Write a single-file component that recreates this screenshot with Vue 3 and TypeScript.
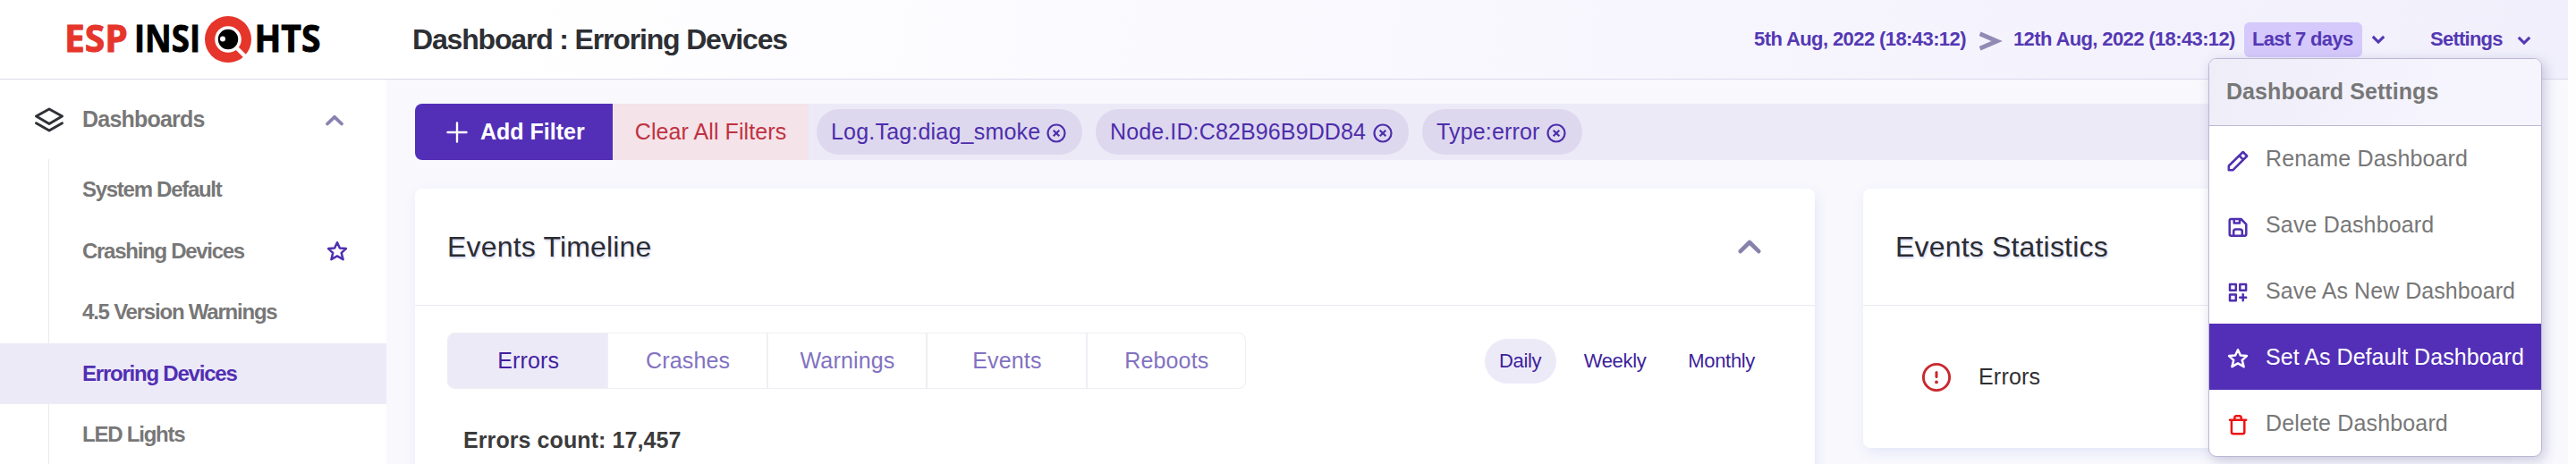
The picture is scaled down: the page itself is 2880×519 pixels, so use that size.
<script setup lang="ts">
import { ref } from 'vue'

interface NavItem { label: string; starred?: boolean; tight: string }
interface MenuItem { label: string; icon: string; tone: string }

const navItems: NavItem[] = [
  { label: 'System Default', tight: 'a' },
  { label: 'Crashing Devices', starred: true, tight: 'a' },
  { label: '4.5 Version Warnings', tight: 'b' },
  { label: 'Erroring Devices', tight: 'b' },
  { label: 'LED Lights', tight: 'b' },
]
const activeNav = ref('Erroring Devices')

const filters = [
  { label: 'Log.Tag:diag_smoke', size: 'chip-log' },
  { label: 'Node.ID:C82B96B9DD84', size: 'chip-node' },
  { label: 'Type:error', size: 'chip-type' },
]

const tabs = ['Errors', 'Crashes', 'Warnings', 'Events', 'Reboots']
const activeTab = ref('Errors')

const periods = ['Daily', 'Weekly', 'Monthly']
const activePeriod = ref('Daily')

const menuItems: MenuItem[] = [
  { label: 'Rename Dashboard', icon: 'pencil', tone: 'loose' },
  { label: 'Save Dashboard', icon: 'save', tone: 'loose' },
  { label: 'Save As New Dashboard', icon: 'grid', tone: '' },
  { label: 'Set As Default Dashboard', icon: 'star', tone: 'selected' },
  { label: 'Delete Dashboard', icon: 'trash', tone: 'loose danger' },
]
</script>

<template>
  <div class="page">
    <header class="topbar">
      <div class="brand">
        <svg class="logo" width="300" height="60" viewBox="66 14 300 60">
          <g font-family="'Open Sans', sans-serif" font-weight="700" font-size="41.5" stroke-width="0.9">
            <text x="72" y="58" fill="#e6352b" stroke="#e6352b" textLength="71" lengthAdjust="spacingAndGlyphs">ESP</text>
            <text x="150" y="58" fill="#000" stroke="#000" textLength="74" lengthAdjust="spacingAndGlyphs">INSI</text>
            <text x="284.500" y="58" fill="#000" stroke="#000" textLength="74" lengthAdjust="spacingAndGlyphs">HTS</text>
          </g>
          <circle cx="255" cy="44" r="26" fill="#e6352b" />
          <circle cx="255" cy="44" r="14.800" fill="#fff" />
          <path d="M264 53 L275 64" stroke="#fff" stroke-width="4.500" />
          <circle cx="255" cy="44" r="11.200" fill="#000" />
          <circle cx="249" cy="43.400" r="3" fill="#fff" />
        </svg>
      </div>
      <h1 class="page-title">Dashboard : Erroring Devices</h1>
      <div class="controls">
        <span class="date date-from">5th Aug, 2022 (18:43:12)</span>
        <svg class="arrow" width="38" height="24" viewBox="0 0 38 24">
          <path d="M0.500 3.800 L19.500 12 L0.500 20.200" fill="none" stroke="#918bb4" stroke-width="5" />
        </svg>
        <span class="date date-to">12th Aug, 2022 (18:43:12)</span>
        <span class="range">Last 7 days</span>
        <svg class="caret" width="16" height="10" viewBox="0 0 16 10">
          <path d="M1.800 1.800 L8 8 L14.200 1.800" />
        </svg>
        <span class="settings">Settings</span>
        <svg class="caret caret-settings" width="16" height="10" viewBox="0 0 16 10">
          <path d="M1.800 1.800 L8 8 L14.200 1.800" />
        </svg>
      </div>
    </header>

    <div class="body">
      <aside class="sidebar">
        <div class="nav-head">
          <svg width="34" height="30" viewBox="0 0 34 30" class="layers">
            <path d="M17 3 L31.500 11 L17 19.500 L2.500 11 Z M2.500 18.800 L17 27 L31.500 18.800" />
          </svg>
          <span class="nav-head-label">Dashboards</span>
          <svg width="22" height="14" viewBox="0 0 22 14" class="fold">
            <path d="M3 10.500 L11 2.800 L19 10.500" />
          </svg>
        </div>
        <nav class="nav-list">
          <a
            v-for="item in navItems"
            :key="item.label"
            class="nav-item"
            :class="[`fit-${item.tight}`, { active: item.label === activeNav }]"
            @click="activeNav = item.label"
          >
            <span>{{ item.label }}</span>
            <svg v-if="item.starred" width="24" height="24" viewBox="0 0 24 24" class="icon">
              <path d="M12 2.200 L14.900 8.500 L21.900 9.100 L16.700 13.900 L18.600 21.200 L12 17.400 L5.400 21.200 L7.200 13.900 L2.100 9.100 L9.100 8.500 Z" />
            </svg>
          </a>
        </nav>
      </aside>

      <main class="content">
        <div class="filterbar">
          <button class="add">
            <svg width="24" height="24" viewBox="0 0 24 24">
              <path d="M12 1.500 V22.500 M1.500 12 H22.500" stroke="#fff" stroke-width="2.400" stroke-linecap="round" />
            </svg>
            <span>Add Filter</span>
          </button>
          <button class="clear">Clear All Filters</button>
          <div v-for="f in filters" :key="f.label" class="chip" :class="f.size">
            <span>{{ f.label }}</span>
            <svg width="22" height="22" viewBox="0 0 22 22">
              <circle cx="11" cy="11" r="9.500" />
              <path d="M7.700 7.700 L14.300 14.300 M14.300 7.700 L7.700 14.300" />
            </svg>
          </div>
        </div>

        <div class="cards">
          <section class="card timeline">
            <div class="card-head">
              <h2>Events Timeline</h2>
              <svg width="28" height="18" viewBox="0 0 28 18" class="fold-lg">
                <path d="M3.700 14.200 L14 4 L24.300 14.200" />
              </svg>
            </div>
            <div class="toolbar">
              <div class="tabs">
                <button
                  v-for="t in tabs"
                  :key="t"
                  class="tab"
                  :class="{ active: t === activeTab }"
                  @click="activeTab = t"
                >{{ t }}</button>
              </div>
              <div class="periods">
                <button
                  v-for="p in periods"
                  :key="p"
                  class="period"
                  :class="{ active: p === activePeriod }"
                  @click="activePeriod = p"
                >{{ p }}</button>
              </div>
            </div>
            <div class="count">Errors count: 17,457</div>
          </section>

          <section class="card stats">
            <div class="card-head">
              <h2>Events Statistics</h2>
            </div>
            <div class="stat">
              <svg width="34" height="34" viewBox="0 0 34 34">
                <circle cx="17" cy="17" r="14.600" fill="none" stroke="#c9282d" stroke-width="2.900" />
                <path d="M17 11.500 V16.500" stroke="#c9282d" stroke-width="3" stroke-linecap="round" />
                <circle cx="17" cy="22.400" r="1.900" fill="#c9282d" />
              </svg>
              <span>Errors</span>
            </div>
          </section>
        </div>
      </main>
    </div>

    <div class="menu">
      <div class="menu-head">Dashboard Settings</div>
      <div v-for="m in menuItems" :key="m.label" class="menu-item" :class="m.tone">
        <svg width="24" height="24" viewBox="0 0 24 24" class="icon">
          <template v-if="m.icon === 'pencil'">
            <path d="M17.700 2 L22.200 6.500 L6.600 22.200 H1.800 V17.500 Z M13.500 6.200 L18 10.700" />
          </template>
          <template v-else-if="m.icon === 'save'">
            <path d="M4.500 3 H15.500 L21.300 8.800 V19.700 Q21.300 21.700 19.300 21.700 H4.700 Q2.700 21.700 2.700 19.700 V5 Q2.700 3 4.500 3 Z M7.700 3 V7.600 H14 V3 M7.200 21.500 V17 Q7.200 14.500 9.700 14.500 H14.300 Q16.800 14.500 16.800 17 V21.500" />
          </template>
          <template v-else-if="m.icon === 'grid'">
            <path d="M3 3 H9.800 V9.800 H3 Z M14.300 3 H21.100 V9.800 H14.300 Z M3 14.400 H9.800 V21.200 H3 Z M17.700 14.300 V21.300 M14.200 17.800 H21.200" />
          </template>
          <template v-else-if="m.icon === 'star'">
            <path d="M12 2.200 L14.900 8.500 L21.900 9.100 L16.700 13.900 L18.600 21.200 L12 17.400 L5.400 21.200 L7.200 13.900 L2.100 9.100 L9.100 8.500 Z" />
          </template>
          <template v-else>
            <path d="M3 6.700 H21.200 M4.900 6.700 V20.300 Q4.900 22.300 6.900 22.300 H17.300 Q19.300 22.300 19.300 20.300 V6.700 M8.300 6.500 V4.500 Q8.300 2.200 10.300 2.200 H13.700 Q15.700 2.200 15.700 4.500 V6.500" />
          </template>
        </svg>
        <span>{{ m.label }}</span>
      </div>
    </div>
  </div>
</template>

<style>
body {
  margin: 0;
  overflow: hidden;
}
</style>

<style scoped>
.page {
  position: relative;
  width: 2880px;
  height: 519px;
  overflow: hidden;
  display: flex;
  flex-direction: column;
  background: #fefeff;
  font-family: "Liberation Sans", Arial, sans-serif;
  font-size: 25px;
  line-height: 1;
}
button {
  border: 0;
  padding: 0;
  background: none;
  font: inherit;
  letter-spacing: inherit;
}
svg {
  display: block;
  flex: none;
}
span {
  white-space: nowrap;
}
.topbar {
  width: 2871px;
  height: 89px;
  flex: none;
  box-sizing: border-box;
  border-bottom: 1px solid #dcd9ec;
  display: flex;
  align-items: center;
  background: linear-gradient(100deg, #fff 18%, #f7f6fe 65%, #f0effb 100%);
}
.brand {
  width: 461px;
  height: 88px;
  display: flex;
  align-items: center;
  padding-left: 66px;
  box-sizing: border-box;
}
.page-title {
  margin: 0;
  padding-bottom: 1px;
  width: 1500px;
  font-size: 32px;
  letter-spacing: -1.17px;
  color: #2d2f34;
}
.controls {
  display: flex;
  align-items: center;
  font-size: 22px;
  font-weight: bold;
  color: #5438b4;
}
.date {
  padding-bottom: 1px;
}
.date-from {
  width: 252px;
  letter-spacing: -0.59px;
}
.arrow {
  margin-top: 3px;
}
.date-to {
  width: 258px;
  letter-spacing: -0.62px;
}
.range {
  width: 132px;
  height: 39px;
  box-sizing: border-box;
  padding: 8px 0 0 9px;
  border-radius: 6px;
  background: #d5c9fb;
  letter-spacing: -0.66px;
}
.caret {
  margin-left: 10px;
  fill: none;
  stroke: #5438b4;
  stroke-width: 3.1;
}
.settings {
  margin-left: 50px;
  width: 81px;
  letter-spacing: -0.75px;
}
.caret-settings {
  margin-left: 16px;
  margin-top: 2px;
}
.body {
  flex: 1;
  display: flex;
}
.sidebar {
  width: 432px;
  flex: none;
  background: #fff;
  display: flex;
  flex-direction: column;
}
.nav-head {
  height: 89px;
  flex: none;
  box-sizing: border-box;
  padding: 0 47px 0 38px;
  display: flex;
  align-items: center;
  color: #777;
  font-weight: bold;
}
.nav-head-label {
  margin-left: 20px;
  flex: 1;
  letter-spacing: -0.78px;
}
.layers {
  fill: none;
  stroke: #2f3136;
  stroke-width: 3;
  stroke-linejoin: round;
  stroke-linecap: round;
}
.fold {
  margin-top: 3px;
  fill: none;
  stroke: #8782b0;
  stroke-width: 3.8;
  stroke-linecap: round;
  stroke-linejoin: round;
}
.nav-list {
  height: 343px;
  flex: none;
  display: grid;
  grid-auto-rows: 68.5px;
  background: linear-gradient(90deg, transparent 54px, #ebe9f0 54px, #ebe9f0 55px, transparent 55px);
}
.nav-item {
  display: flex;
  align-items: center;
  justify-content: space-between;
  padding: 0 43px 0 92px;
  font-size: 24px;
  font-weight: bold;
  color: #777;
}
.nav-item .icon {
  margin-top: 1px;
}
.fit-a { letter-spacing: -1.28px; }
.fit-b { letter-spacing: -1.22px; }
.nav-item.active {
  background: #edeaf8;
  color: #512fb2;
}
.icon {
  fill: none;
  stroke: #4f2fb0;
  stroke-width: 2.5;
  stroke-linejoin: round;
  stroke-linecap: round;
}
.content {
  width: 2439px;
  flex: none;
  box-sizing: border-box;
  padding: 27px 61px 0 32px;
  background: #f8f8fd;
  display: flex;
  flex-direction: column;
}
.filterbar {
  height: 63px;
  flex: none;
  display: flex;
  align-items: center;
  border-radius: 8px;
  overflow: hidden;
  background: #edeaf8;
}
.add {
  width: 221px;
  height: 63px;
  display: flex;
  align-items: center;
  padding-left: 35px;
  background: #532fb7;
  color: #fff;
  font-weight: bold;
}
.add span {
  margin-left: 14px;
}
.clear {
  width: 219px;
  height: 63px;
  background: #f4e3e8;
  color: #c13142;
  letter-spacing: 0.08px;
}
.chip {
  height: 51px;
  box-sizing: border-box;
  margin-left: 15px;
  padding: 0 18px 0 16px;
  display: flex;
  align-items: center;
  justify-content: space-between;
  border-radius: 25px;
  background: #ded8ef;
  color: #4d2eab;
}
.clear + .chip {
  margin-left: 9px;
}
.chip span {
  padding-bottom: 1px;
}
.chip svg {
  margin-top: 2px;
  fill: none;
  stroke: #4d2eab;
  stroke-width: 2.2;
}
.chip-log { width: 297px; letter-spacing: 0.2px; }
.chip-node { width: 350px; letter-spacing: 0.13px; }
.chip-type { width: 179px; letter-spacing: 0.16px; }
.cards {
  margin-top: 32px;
  display: flex;
  align-items: flex-start;
  gap: 54px;
}
.card {
  background: #fff;
  border-radius: 8px;
  box-shadow: 2px 5px 14px rgba(110, 120, 220, 0.13);
}
.timeline {
  width: 1565px;
  height: 340px;
  flex: none;
}
.stats {
  flex: 1;
  height: 290px;
}
.card-head {
  height: 131px;
  box-sizing: border-box;
  border-bottom: 1px solid #eae9ef;
  padding: 0 59px 0 36px;
  display: flex;
  align-items: center;
  justify-content: space-between;
}
h2 {
  margin: 0;
  font-size: 32px;
  font-weight: normal;
  letter-spacing: 0.18px;
  color: #2b2d33;
  text-shadow: 1px 2px 2px rgba(90, 100, 190, 0.25);
}
.fold-lg {
  fill: none;
  stroke: #8782ab;
  stroke-width: 4.6;
  stroke-linecap: round;
  stroke-linejoin: round;
}
.toolbar {
  display: flex;
  justify-content: space-between;
  align-items: center;
  padding: 30px 51px 0 36px;
}
.tabs {
  display: flex;
  width: 893px;
  height: 63px;
  box-sizing: border-box;
  border: 1px solid #efeef4;
  border-radius: 8px;
  overflow: hidden;
}
.tab {
  flex: 1;
  padding: 0 0 1px 1px;
  border-left: 2px solid #efeef4;
  color: #8272c2;
  letter-spacing: 0.16px;
}
.tab:first-child {
  border-left: 0;
}
.tab.active {
  margin: -1px 0 -1px -1px;
  padding-left: 3px;
  background: #edeaf8;
  color: #411f9f;
}
.periods {
  display: flex;
  font-size: 22px;
  letter-spacing: -0.34px;
  color: #3e1f9c;
}
.period {
  height: 50px;
  padding: 0 16px;
  border-radius: 25px;
  color: inherit;
}
.period + .period {
  margin-left: 15px;
}
.period.active {
  width: 80px;
  background: #edeaf8;
}
.count {
  margin: 45px 0 0 54px;
  font-weight: bold;
  color: #3b3b3b;
  letter-spacing: 0.09px;
}
.stat {
  height: 159px;
  padding-left: 65px;
  display: flex;
  align-items: center;
  color: #2f2f33;
}
.stat span {
  margin-left: 30px;
  letter-spacing: 0.2px;
}
.menu {
  position: absolute;
  left: 2469px;
  top: 65px;
  width: 373px;
  height: 446px;
  box-sizing: border-box;
  border: 1px solid #bcb8d4;
  border-radius: 9px;
  overflow: hidden;
  background: #fff;
  box-shadow: 3px 4px 14px rgba(70, 60, 130, 0.26);
}
.menu-head {
  height: 75px;
  box-sizing: border-box;
  border-bottom: 1px solid #bcb8d4;
  padding: 24px 0 0 19px;
  background: linear-gradient(110deg, #eeedf8, #f6f5fe 70%);
  font-weight: bold;
  letter-spacing: 0.07px;
  color: #777;
}
.menu-item {
  height: 73.8px;
  padding-left: 20px;
  display: flex;
  align-items: center;
  color: #777;
  letter-spacing: 0.05px;
}
.menu-item .icon {
  margin-top: 4px;
}
.menu-item span {
  margin-left: 19px;
}
.menu-item.loose {
  letter-spacing: 0.15px;
}
.menu-item.selected {
  background: #532fb7;
  color: #fff;
}
.menu-item.selected .icon {
  stroke: #fff;
}
.menu-item.danger .icon {
  stroke: #ee1212;
}
</style>
